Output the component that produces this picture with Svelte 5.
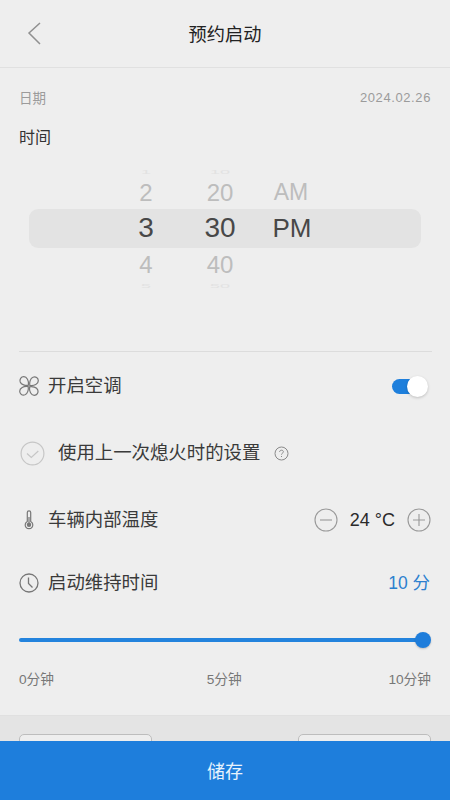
<script>
  // Picker wheel columns, top to bottom: faint, near, selected, near, faint
  const columns = [
    { key: 'hour', items: ['1', '2', '3', '4', '5'] },
    { key: 'minute', items: ['10', '20', '30', '40', '50'] },
    { key: 'period', items: ['', 'AM', 'PM', '', ''] },
  ];
  const rowClass = ['far top', 'near', 'selected', 'near', 'far bottom'];

  let airOn = $state(true);
  let temperature = $state(24);
</script>

<div class="page">
  <header class="header">
    <button class="back" aria-label="返回">
      <svg width="14" height="24" viewBox="0 0 14 24"><path d="M13 2 2 12 13 23" fill="none" stroke="#909090" stroke-width="1.5"/></svg>
    </button>
    <h1>预约启动</h1>
  </header>

  <main class="content">
    <div class="date-row">
      <span>日期</span>
      <span class="date">2024.02.26</span>
    </div>
    <div class="time-label">时间</div>

    <div class="picker">
      <div class="band"></div>
      {#each columns as col}
        <div class="wheel {col.key}">
          {#each col.items as item, i}
            <div class="cell {rowClass[i]}">{item}</div>
          {/each}
        </div>
      {/each}
    </div>

    <div class="divider"></div>

    <div class="row air">
      <svg class="icon" width="22" height="22" viewBox="0 0 22 22" fill="none" stroke="#777" stroke-width="1.2">
        <path d="M10.400 10.200C7.500 10.800 3.200 9.700 2.200 7 1.300 4.300 3 1.700 5.800 1.700c3 0 5.300 3.800 4.600 8.500Z"/>
        <path d="M11.800 10.400c-.6-2.900.5-7.200 3.200-8.200 2.700-.9 5.300.8 5.300 3.600 0 3-3.800 5.300-8.500 4.600Z"/>
        <path d="M11.600 11.800c2.900-.6 7.200.5 8.200 3.200.9 2.700-.8 5.300-3.600 5.300-3 0-5.300-3.800-4.600-8.500Z"/>
        <path d="M10.200 11.600c.6 2.900-.5 7.200-3.200 8.200-2.700.9-5.300-.8-5.300-3.600 0-3 3.800-5.300 8.500-4.600Z"/>
      </svg>
      <span class="label">开启空调</span>
      <button class="switch" class:on={airOn} onclick={() => (airOn = !airOn)} aria-label="开启空调">
        <span class="knob"></span>
      </button>
    </div>

    <div class="row last">
      <svg class="check" width="25" height="25" viewBox="0 0 25 25" fill="none" stroke="#c6c6c6" stroke-width="1.200">
        <circle cx="12.500" cy="12.500" r="11.400"/>
        <path d="m7 12.500 4.300 4 7-6.500"/>
      </svg>
      <span class="label">使用上一次熄火时的设置</span>
      <svg class="help" width="15" height="15" viewBox="0 0 15 15" fill="none" stroke="#8a8a8a">
        <circle cx="7.500" cy="7.500" r="6.500"/>
        <path d="M5.600 6c0-1.100.8-1.800 1.900-1.800s1.900.7 1.900 1.600c0 1.300-1.900 1.400-1.900 2.800"/>
        <path d="M7.500 10v1"/>
      </svg>
    </div>

    <div class="row temp">
      <svg class="icon" width="22" height="22" viewBox="0 0 22 22" fill="none" stroke="#777" stroke-width="1.200">
        <path d="M9.300 12.500V3.500a1.700 1.700 0 0 1 3.400 0v9a3.800 3.800 0 1 1-3.400 0Z"/>
        <circle cx="11" cy="15.800" r="2.200" fill="#777" stroke="none"/>
        <path d="M11 8v6"/>
      </svg>
      <span class="label">车辆内部温度</span>
      <div class="stepper">
        <button class="step" aria-label="减" onclick={() => temperature--}>
          <svg width="24" height="24" viewBox="0 0 24 24" fill="none" stroke="#999" stroke-width="1.100"><circle cx="12" cy="12" r="11"/><path d="M6 12h12"/></svg>
        </button>
        <span class="value">{temperature} °C</span>
        <button class="step" aria-label="加" onclick={() => temperature++}>
          <svg width="24" height="24" viewBox="0 0 24 24" fill="none" stroke="#999" stroke-width="1.100"><circle cx="12" cy="12" r="11"/><path d="M6 12h12M12 6v12"/></svg>
        </button>
      </div>
    </div>

    <div class="row duration">
      <svg class="icon" width="22" height="22" viewBox="0 0 22 22" fill="none" stroke="#777" stroke-width="1.300">
        <circle cx="11" cy="11" r="9"/>
        <path d="M10.500 5.500v6l4 4"/>
      </svg>
      <span class="label">启动维持时间</span>
      <span class="minutes">10 分</span>
    </div>

    <div class="slider">
      <div class="track"></div>
      <div class="thumb"></div>
    </div>

    <div class="ticks">
      <span>0分钟</span>
      <span class="mid">5分钟</span>
      <span>10分钟</span>
    </div>
  </main>

  <div class="shelf">
    <div class="ghost"></div>
    <div class="ghost"></div>
  </div>

  <button class="save">储存</button>
</div>

<style>
  :global(body) {
    margin: 0;
    background: #eeeeee;
  }

  .page {
    width: 450px;
    height: 800px;
    display: flex;
    flex-direction: column;
    overflow: hidden;
    background: #eeeeee;
    color: #2e2e2e;
    font-family: "Liberation Sans", "Noto Sans CJK SC", sans-serif;
  }

  button {
    padding: 0;
    border: none;
    background: none;
    font: inherit;
    cursor: pointer;
  }

  .header {
    position: relative;
    flex: none;
    height: 67px;
    display: flex;
    align-items: center;
    justify-content: center;
    border-bottom: 1px solid #e0e0e0;
  }

  .header h1 {
    margin: 0 0 2px;
    font-size: 18.200px;
    font-weight: 400;
    color: #222;
  }

  .back {
    position: absolute;
    left: 27px;
    top: 21px;
    height: 24px;
  }

  .content {
    flex: 1;
    padding: 0 18px 0 19px;
  }

  .date-row {
    height: 58px;
    display: flex;
    justify-content: space-between;
    align-items: center;
    font-size: 13.500px;
    color: #9b9b9b;
  }

  .date {
    margin-right: 1px;
    font-size: 13px;
    letter-spacing: 0.6px;
  }

  .time-label {
    height: 20px;
    margin-top: 2px;
    line-height: 20px;
    font-size: 16px;
    color: #333;
  }

  .picker {
    position: relative;
    height: 183px;
    margin-top: 11px;
    overflow: hidden;
  }

  .band {
    position: absolute;
    left: 10px;
    right: 11px;
    top: 50px;
    height: 39px;
    border-radius: 9px;
    background: #e3e3e3;
  }

  .wheel {
    position: absolute;
    top: 8px;
    width: 80px;
    text-align: center;
  }

  .wheel.hour { left: 87px; }
  .wheel.minute { left: 161px; }
  .wheel.period { left: 232px; }

  .cell {
    position: relative;
    height: 35.500px;
    line-height: 37px;
    color: #bdbdbd;
    font-size: 24px;
  }

  .cell.selected {
    height: 36px;
    line-height: 36px;
    font-size: 28px;
    color: #484848;
  }

  .wheel.period .cell.selected {
    padding-left: 2px;
    font-size: 26px;
  }

  .wheel.period .cell.near {
    font-size: 23px;
  }

  .cell.far {
    height: 10px;
    line-height: 10px;
    color: #e2e2e2;
    font-size: 18px;
    transform: scaleY(0.25);
  }

  .cell.top {
    margin-bottom: -3px;
  }

  .divider {
    height: 1px;
    margin-top: 9px;
    background: #dcdcdc;
  }

  .row {
    display: flex;
    align-items: center;
    font-size: 18.400px;
    color: #3a3a3a;
  }

  .label {
    line-height: 24px;
  }

  .icon {
    flex: none;
    margin-right: 8px;
    margin-left: -1px;
  }

  .air {
    height: 24px;
    margin-top: 22px;
  }

  .switch {
    position: relative;
    margin-left: auto;
    margin-right: 7px;
    width: 33px;
    height: 15px;
    border-radius: 8px;
    background: #ccc;
  }

  .switch.on {
    background: #1e7fdc;
  }

  .knob {
    position: absolute;
    right: -3px;
    top: -3px;
    width: 21px;
    height: 21px;
    border-radius: 50%;
    background: #fff;
    box-shadow: 0 1px 3px rgba(0, 0, 0, 0.2);
  }

  .last {
    height: 26px;
    margin-top: 42px;
  }

  .check {
    margin-left: 1px;
    margin-right: 13px;
  }

  .help {
    margin-left: 14px;
  }

  .temp {
    height: 26px;
    margin-top: 41px;
  }

  .stepper {
    margin-left: auto;
    margin-right: 1px;
    display: flex;
    align-items: center;
    gap: 12px;
  }

  .step {
    display: flex;
    width: 24px;
    height: 24px;
  }

  .value {
    font-size: 18px;
    color: #2a2a2a;
  }

  .duration {
    height: 24px;
    margin-top: 38px;
  }

  .minutes {
    margin-left: auto;
    margin-right: 2px;
    line-height: 24px;
    font-size: 17.500px;
    color: #2c80cf;
  }

  .slider {
    position: relative;
    height: 18px;
    margin-top: 36px;
    display: flex;
    align-items: center;
  }

  .track {
    flex: 1;
    height: 4px;
    margin-right: 2px;
    border-radius: 2px;
    background: #2383dd;
  }

  .thumb {
    position: absolute;
    right: 1px;
    top: 1px;
    width: 16px;
    height: 16px;
    border-radius: 50%;
    background: #1e7ddb;
    box-shadow: 0 1px 2px rgba(0, 0, 0, 0.2);
  }

  .ticks {
    display: flex;
    justify-content: space-between;
    margin-top: 23px;
    padding-right: 1px;
    font-size: 13.700px;
    line-height: 16px;
    color: #777;
  }

  .mid {
    margin-left: 6px;
  }

  .shelf {
    flex: none;
    height: 26px;
    padding: 18px 19px 0 19px;
    box-sizing: border-box;
    display: flex;
    justify-content: space-between;
    overflow: hidden;
    background: #e4e4e4;
    border-top: 1px solid #e0e0e0;
  }

  .ghost {
    width: 133px;
    height: 30px;
    box-sizing: border-box;
    border: 1px solid #bdbdbd;
    border-radius: 5px;
    background: #eeeeee;
  }

  .save {
    flex: none;
    height: 59px;
    padding-bottom: 2px;
    background: #1e7edc;
    color: #e8f3fc;
    font-size: 18px;
  }
</style>
